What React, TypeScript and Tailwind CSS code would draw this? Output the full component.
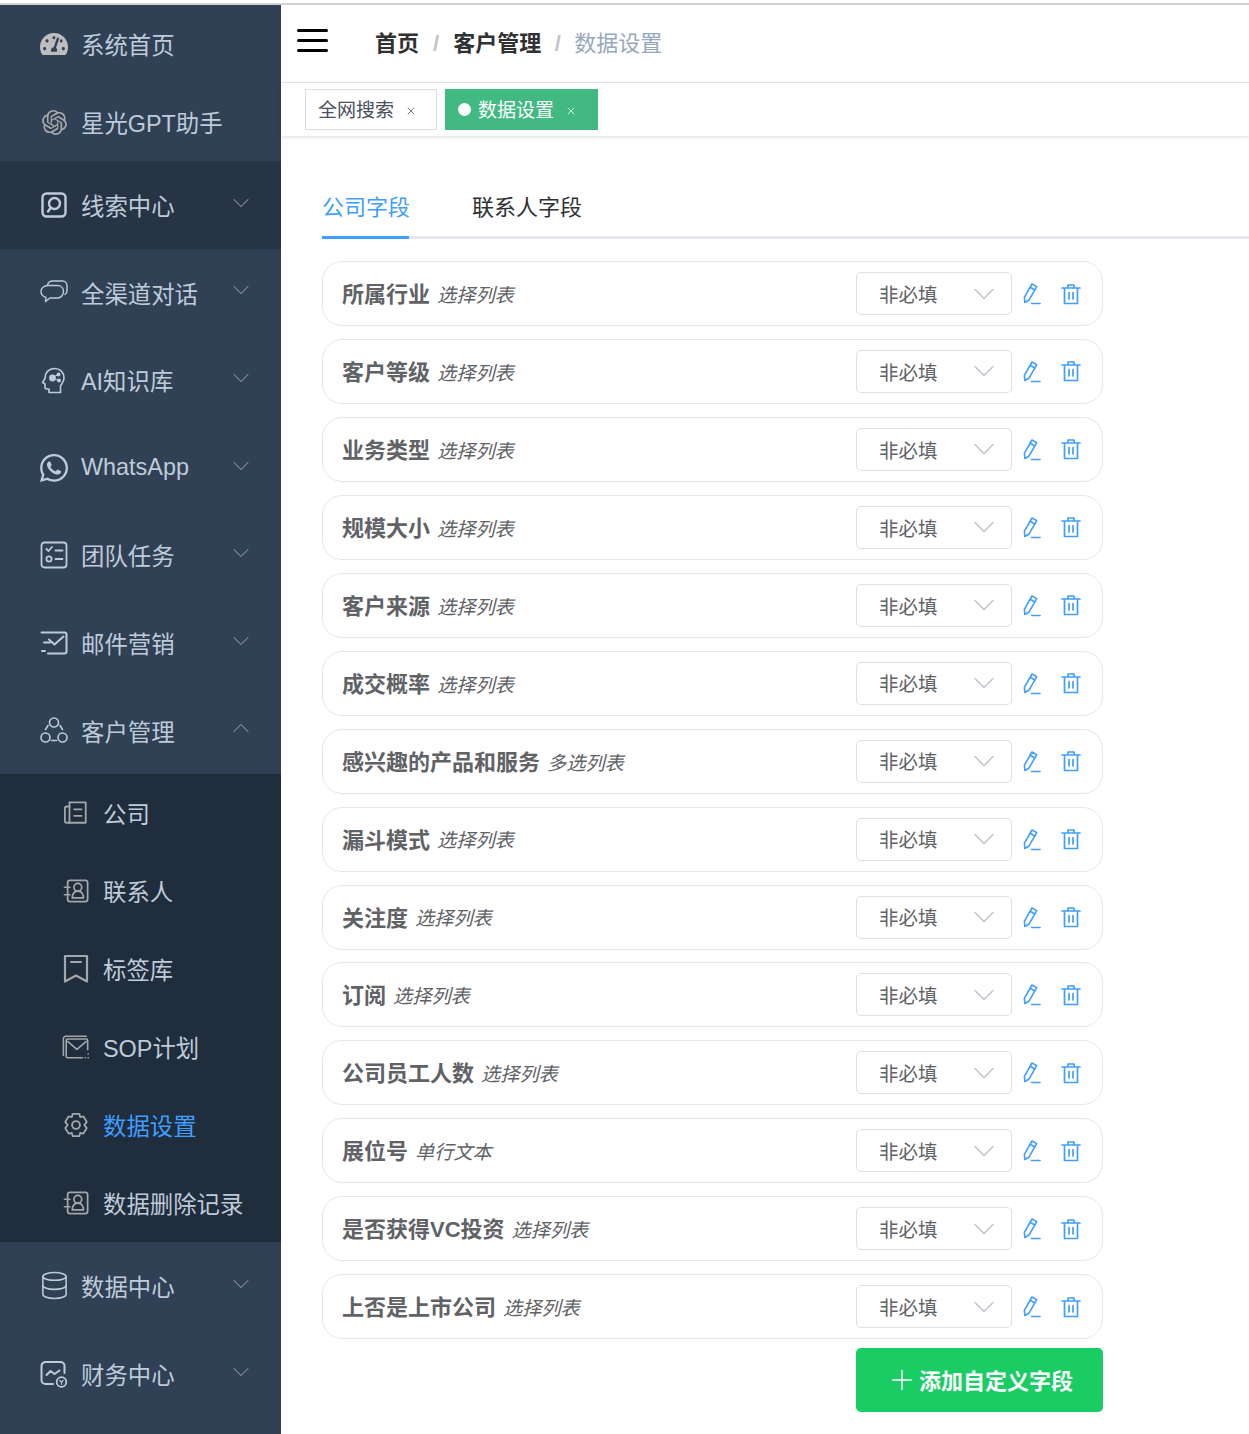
import { ReactNode } from 'react';
import { ChevronDown, ChevronUp, Database, Plus, X } from 'lucide-react';
import { FaTachometerAlt, FaWhatsapp } from 'react-icons/fa';
import { SiOpenai } from 'react-icons/si';

const Svg = ({ children, className = 'w-[28px] h-[28px]', box = '0 0 28 28' }: { children: ReactNode; className?: string; box?: string }) => (
  <svg viewBox={box} fill="none" stroke="currentColor" strokeWidth="1.6" strokeLinecap="round" strokeLinejoin="round" className={className}>
    {children}
  </svg>
);

const ClueIcon = () => (
  <Svg>
    <rect x="2.500" y="2.500" width="23" height="23" rx="4" strokeWidth="2.400" />
    <circle cx="14.500" cy="12.500" r="5.500" strokeWidth="2.400" />
    <path d="M10.500 17l-2.500 3.500" strokeWidth="2.400" />
  </Svg>
);

const ChatIcon = () => (
  <Svg>
    <path d="M8 7.500h9.500c3.500 0 6 2.500 6 6s-2.500 6.500-6 6.500H10l-4.500 3.500.500-4C3 18.500 1 16.500 1 13.500 1 10 4 7.500 8 7.500z" strokeWidth="1.400" />
    <path d="M7.500 7c.5-2.500 2.500-4 5.500-4h9.500c2.500 0 4.500 2 4.500 4.500v5c0 1.800-.8 3.200-2 4" strokeWidth="1.400" />
  </Svg>
);

const BrainIcon = () => (
  <Svg>
    <path d="M9 26.500v-3.500H6.500A1.500 1.500 0 0 1 5 21.500V18l-2.500-1.500L5 12.500C5 6.500 9 2.500 14.500 2.500c5.500 0 9.500 4 9.500 9.500 0 4-2.500 6-3.500 8v6.500H9z" />
    <circle cx="12.500" cy="12" r="2.600" fill="currentColor" />
    <circle cx="18.500" cy="8.500" r="1.200" fill="currentColor" />
    <circle cx="19" cy="14.500" r="1.200" fill="currentColor" />
    <path d="M14.500 10.500l3-1.500M14.500 13l3 1" strokeWidth="1" />
  </Svg>
);

const TaskIcon = () => (
  <Svg>
    <rect x="1.500" y="1.500" width="25" height="25" rx="3" strokeWidth="1.800" />
    <path d="M6.500 8l2 2 3.500-4M15.500 9.500h7M15.500 18h7" strokeWidth="1.800" />
    <circle cx="9" cy="18" r="2.600" strokeWidth="1.800" />
  </Svg>
);

const MailIcon = () => (
  <Svg>
    <path d="M1.500 3.500h23a2 2 0 0 1 2 2v17a2 2 0 0 1-2 2H8M4 13.500h6M5 22H2" strokeWidth="2" />
    <path d="M9 10.500l5.500 5 9-8" strokeWidth="2" />
  </Svg>
);

const CustomerIcon = () => (
  <Svg>
    <circle cx="14" cy="6.500" r="4.500" />
    <circle cx="5.500" cy="21.500" r="4.500" />
    <circle cx="22.500" cy="21.500" r="4.500" />
    <path d="M5.500 13.500L8 9.500M22.500 13.500l-2.500-4M11.500 24.500h5" />
  </Svg>
);

const CompanyIcon = () => (
  <Svg className="w-[26px] h-[26px]">
    <path d="M7 2.500h17.500v22H4a2 2 0 0 1-2-2V9a2 2 0 0 1 2-2h3" strokeWidth="1.900" />
    <path d="M7 2.500v22M12 10h8M12 17h8" strokeWidth="1.900" />
  </Svg>
);

const ContactIcon = () => (
  <Svg className="w-[26px] h-[26px]">
    <rect x="5" y="2.500" width="21.500" height="23" rx="2.500" strokeWidth="1.900" />
    <path d="M1.500 10h6M1.500 18h6" strokeWidth="1.700" />
    <circle cx="16" cy="10" r="4.200" strokeWidth="1.900" />
    <path d="M10 21.500c0-4.500 2.500-7.500 6-7.500s6 3 6 7.500z" strokeWidth="1.900" />
  </Svg>
);

const BookmarkIcon = () => (
  <Svg className="w-[26px] h-[30px]" box="0 0 26 30">
    <path d="M2 2h22v25.500l-11-6-11 6z" strokeWidth="2.200" />
    <path d="M8 8h10" strokeWidth="2.200" />
  </Svg>
);

const SopIcon = () => (
  <Svg className="w-[30px] h-[26px]" box="0 0 30 26">
    <path d="M1.500 22V4a2.500 2.500 0 0 1 2.500-2.500h22" strokeWidth="1.700" />
    <path d="M27.500 16V6a1.500 1.500 0 0 0-1.500-1.500H6A1.500 1.500 0 0 0 4.500 6v17a1.500 1.500 0 0 0 1.500 1.500h16" strokeWidth="1.700" />
    <path d="M6 7l10 8.500L26 7" strokeWidth="1.700" />
    <path d="M25 24.500h.2M28 24.500h.2M28 20.500h.2" strokeWidth="1.700" />
  </Svg>
);

const GearIcon = () => (
  <Svg className="w-[26px] h-[26px]">
    <path d="M10.500 2h7l1 3.500 3.500-.8 3.600 6-2.600 3.300 2.600 3.300-3.600 6-3.500-.8-1 3.500h-7l-1-3.500-3.500.8-3.600-6 2.600-3.300-2.600-3.300 3.600-6 3.500.8z" strokeWidth="2" />
    <circle cx="14" cy="14" r="4.200" strokeWidth="2" />
  </Svg>
);

const FinanceIcon = () => (
  <Svg>
    <path d="M24.500 13V6a4 4 0 0 0-4-4H5.500a4 4 0 0 0-4 4v14a4 4 0 0 0 4 4H13" strokeWidth="2" />
    <path d="M6.500 15l4-4 4 3 5-3.500" strokeWidth="2" />
    <circle cx="21.500" cy="22" r="4.800" strokeWidth="1.800" />
    <path d="M19.800 20.500l1.700 1.700 1.700-1.700M21.500 22.200v2" strokeWidth="1.200" />
  </Svg>
);

type MenuItem = { label: string; icon: ReactNode; arrow?: 'down' | 'up'; dark?: boolean; tall?: boolean; latin?: boolean };

const topMenu: MenuItem[] = [
  { label: '系统首页', icon: <FaTachometerAlt className="w-[28px] h-[28px] text-[#bdbdbd]" /> },
  { label: '星光GPT助手', icon: <SiOpenai className="w-[25px] h-[25px] text-[#a9a9a9]" /> },
  { label: '线索中心', icon: <ClueIcon />, arrow: 'down', dark: true, tall: true },
  { label: '全渠道对话', icon: <ChatIcon />, arrow: 'down', tall: true },
  { label: 'AI知识库', icon: <BrainIcon />, arrow: 'down', tall: true },
  { label: 'WhatsApp', icon: <FaWhatsapp className="w-[32px] h-[32px] shrink-0" />, arrow: 'down', tall: true, latin: true },
  { label: '团队任务', icon: <TaskIcon />, arrow: 'down', tall: true },
  { label: '邮件营销', icon: <MailIcon />, arrow: 'down', tall: true },
  { label: '客户管理', icon: <CustomerIcon />, arrow: 'up', tall: true },
];

const subMenu: { label: string; icon: ReactNode; active?: boolean }[] = [
  { label: '公司', icon: <CompanyIcon /> },
  { label: '联系人', icon: <ContactIcon /> },
  { label: '标签库', icon: <BookmarkIcon /> },
  { label: 'SOP计划', icon: <SopIcon /> },
  { label: '数据设置', icon: <GearIcon />, active: true },
  { label: '数据删除记录', icon: <ContactIcon /> },
];

const bottomMenu: MenuItem[] = [
  { label: '数据中心', icon: <Database className="w-[31px] h-[31px] shrink-0" strokeWidth={1.2} />, arrow: 'down', tall: true },
  { label: '财务中心', icon: <FinanceIcon />, arrow: 'down', tall: true },
];

const fields = [
  ['所属行业', '选择列表'],
  ['客户等级', '选择列表'],
  ['业务类型', '选择列表'],
  ['规模大小', '选择列表'],
  ['客户来源', '选择列表'],
  ['成交概率', '选择列表'],
  ['感兴趣的产品和服务', '多选列表'],
  ['漏斗模式', '选择列表'],
  ['关注度', '选择列表'],
  ['订阅', '选择列表'],
  ['公司员工人数', '选择列表'],
  ['展位号', '单行文本'],
  ['是否获得VC投资', '选择列表'],
  ['上否是上市公司', '选择列表'],
];

const MenuRow = ({ item }: { item: MenuItem }) => (
  <div className={`flex items-center pl-[40px] pr-[26px] text-[#bfcbd9] ${item.tall ? 'h-[87.6px]' : 'h-[78px]'} ${item.dark ? 'bg-[#263445]' : ''}`}>
    <span className="w-[28px] h-[30px] flex items-center justify-center shrink-0">{item.icon}</span>
    <span className={`ml-[13px] text-[23.4px] leading-none ${item.latin ? '' : 'mt-[6px]'}`}>{item.label}</span>
    {item.arrow === 'down' && <ChevronDown className="ml-auto mb-[4px] w-[28px] h-[28px] text-[#909399]" strokeWidth={0.9} />}
    {item.arrow === 'up' && <ChevronUp className="ml-auto mb-[4px] w-[28px] h-[28px] text-[#909399]" strokeWidth={0.9} />}
  </div>
);

const Sidebar = () => (
  <aside className="w-[281px] shrink-0 bg-[#304156]">
    {topMenu.map((item) => (
      <MenuRow key={item.label} item={item} />
    ))}
    <div className="bg-[#1f2d3d]">
      {subMenu.map((item) => (
        <div key={item.label} className="flex items-center h-[78px] pl-[62px]">
          <span className="w-[28px] h-[30px] flex items-center justify-center shrink-0 text-[#a3a6ab]">{item.icon}</span>
          <span className={`ml-[13px] mt-[6px] text-[23.4px] leading-none ${item.active ? 'text-[#409eff]' : 'text-[#bfcbd9]'}`}>{item.label}</span>
        </div>
      ))}
    </div>
    {bottomMenu.map((item) => (
      <MenuRow key={item.label} item={item} />
    ))}
  </aside>
);

const EditIcon = () => (
  <svg viewBox="0 0 20 24" fill="none" stroke="#409eff" strokeWidth="1.700" strokeLinejoin="round" strokeLinecap="round" className="w-[19px] h-[23px]">
    <path d="M10.500 2l5 2.800-8 14-4.500 2.700-.5-5.500z" />
    <path d="M8.500 5.500l5 2.800M10 22.500h9" />
  </svg>
);

const TrashIcon = () => (
  <svg viewBox="0 0 20 22" fill="none" stroke="#409eff" strokeWidth="1.700" strokeLinejoin="round" strokeLinecap="round" className="w-[20px] h-[22px]">
    <path d="M1 5h18M7 5V2h6v3M3.500 5v15.500h13V5M8 9.500v6.500M12 9.500v6.500" />
  </svg>
);

const FieldCard = ({ name, type }: { name: string; type: string }) => (
  <div className="w-[781px] h-[65px] mb-[12.95px] flex items-center border border-[#e4e7ed] rounded-[20px] pl-[19px]">
    <span className="text-[22px] font-bold text-[#606266] leading-none mt-[3px]">{name}</span>
    <span className="ml-[7px] mt-[4px] text-[19.200px] italic text-[#606266] leading-none">{type}</span>
    <div className="ml-auto w-[156px] h-[43px] flex items-center border border-[#dcdfe6] rounded-[5px] pl-[22px] pr-[9px]">
      <span className="text-[19.500px] text-[#606266] leading-none mt-[4px]">非必填</span>
      <ChevronDown className="ml-auto w-[36px] h-[36px] text-[#c0c4cc]" strokeWidth={1} />
    </div>
    <div className="ml-[9px] w-[20px] flex justify-center"><EditIcon /></div>
    <div className="ml-[20px] mr-[21px] w-[20px] flex justify-center"><TrashIcon /></div>
  </div>
);

const App = () => (
  <div className="min-h-screen h-[1434px] overflow-hidden bg-white flex flex-col font-['Liberation_Sans','Noto_Sans_CJK_SC',sans-serif]">
    <div className="h-[5px] shrink-0 bg-white border-b-2 border-[#cfd1d4]" />
    <div className="flex flex-1">
      <Sidebar />
      <main className="flex-1 min-w-0">
        <div className="h-[78px] flex items-center border-b border-[#e8eaed] pl-[16px]">
          <div className="w-[31px] flex flex-col gap-[7px] mb-[6px]">
            <span className="h-[3px] bg-black rounded-full" />
            <span className="h-[3px] bg-black rounded-full" />
            <span className="h-[3px] bg-black rounded-full" />
          </div>
          <nav className="ml-[47px] flex items-center text-[22px] leading-none">
            <span className="font-bold text-[#303133]">首页</span>
            <span className="mx-[14px] font-bold text-[#c0c4cc]">/</span>
            <span className="font-bold text-[#303133]">客户管理</span>
            <span className="mx-[13.5px] font-bold text-[#c0c4cc]">/</span>
            <span className="text-[#97a8be]">数据设置</span>
          </nav>
        </div>
        <div className="h-[53px] flex items-start pt-[6px] pl-[24px] gap-[8px] shadow-[0_1px_4px_rgba(0,21,41,0.15)]">
          <div className="w-[132px] h-[41px] flex items-center border border-[#d8dce5] pl-[12px] text-[19px] text-[#495060]">
            <span className="leading-none mt-[2px]">全网搜索</span>
            <X className="ml-[11px] w-[12px] h-[12px] mt-[2px]" strokeWidth={1.5} />
          </div>
          <div className="w-[153px] h-[41px] flex items-center bg-[#42b983] pl-[13px] text-[19px] text-white">
            <span className="w-[13px] h-[13px] rounded-full bg-white" />
            <span className="ml-[7px] leading-none mt-[2px]">数据设置</span>
            <X className="ml-[11px] w-[12px] h-[12px] mt-[2px]" strokeWidth={1.5} />
          </div>
        </div>
        <div className="pt-[50px] pl-[41px]">
          <div className="flex h-[53px] border-b-[3px] border-[#e4e7ed] text-[22px] leading-none mb-[22px]">
            <div className="w-[87px] h-[53px] pt-[11px] border-b-[3px] border-[#409eff] text-[#409eff] whitespace-nowrap">公司字段</div>
            <div className="ml-[63px] pt-[11px] text-[#303133]">联系人字段</div>
          </div>
          {fields.map(([name, type]) => (
            <FieldCard key={name} name={name} type={type} />
          ))}
          <div className="w-[781px] flex justify-end -mt-[4px]">
            <button className="w-[247px] h-[64px] flex items-center justify-center bg-[#19cd64] rounded-[5px] text-white text-[22px] font-bold">
              <Plus className="w-[32px] h-[32px] mr-[1px]" strokeWidth={1.2} />
              <span className="mt-[2px]">添加自定义字段</span>
            </button>
          </div>
        </div>
      </main>
    </div>
  </div>
);

export default App;
